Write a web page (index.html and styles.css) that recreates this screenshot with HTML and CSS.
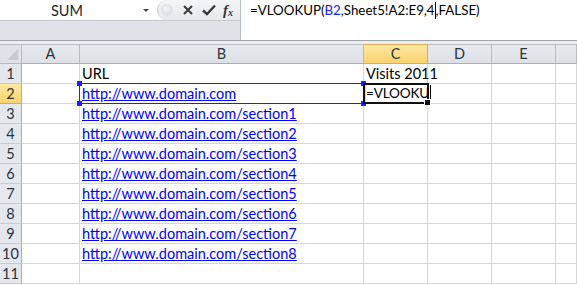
FILE: index.html
```html
<!DOCTYPE html>
<html lang="en">
<head>
    <meta charset="UTF-8">
    <meta name="viewport" content="width=device-width, initial-scale=1.0">
    <title>VLOOKUP</title>
    <link rel="stylesheet" href="styles.css">
</head>
<body>
    <div class="toolbar">
        <div class="toolbar-left">
            <div class="name-row">
                <div class="namebox">SUM</div>
                <div class="dropdown"></div>
                <div class="buttons">
                    <span class="knob"></span>
                    <svg class="btn" width="12" height="12" viewBox="0 0 12 12">
                        <path d="M2 2 L10 10 M10 2 L2 10" stroke="#3a3a3a" stroke-width="2" fill="none"/>
                    </svg>
                    <svg class="btn" width="14" height="12" viewBox="0 0 14 12">
                        <path d="M1 6.5 L5 10 L13 1.5" stroke="#3a3a3a" stroke-width="2.4" fill="none"/>
                    </svg>
                    <span class="fx">f<sub>x</sub></span>
                </div>
            </div>
            <div class="name-under"></div>
        </div>
        <div class="formula">=VLOOKUP(<span class="ref">B2</span>,Sheet5!A2:E9,4<span class="caret"></span>,FALSE)</div>
    </div>
    <div class="splitter"></div>

    <div class="sheet">
        <!-- header row -->
        <div class="corner"><span class="corner-tri"></span></div>
        <div class="colhead">A</div>
        <div class="colhead">B</div>
        <div class="colhead active">C</div>
        <div class="colhead">D</div>
        <div class="colhead">E</div>
        <div class="colhead"></div>

        <div class="rowhead">1</div>
        <div class="cell"></div>
        <div class="cell">URL</div>
        <div class="cell overflow">Visits 2011</div>
        <div class="cell"></div>
        <div class="cell"></div>
        <div class="cell"></div>

        <div class="rowhead active">2</div>
        <div class="cell"></div>
        <div class="cell ref-range">
            <a href="#">http://www.domain.com</a>
            <span class="handle tl"></span><span class="handle bl"></span>
            <span class="handle tr"></span><span class="handle br"></span>
        </div>
        <div class="cell editing">
            <div class="edit-text">=VLOOKU<span class="caret"></span></div>
            <span class="fill"></span>
        </div>
        <div class="cell"></div>
        <div class="cell"></div>
        <div class="cell"></div>

        <div class="rowhead">3</div>
        <div class="cell"></div>
        <div class="cell"><a href="#">http://www.domain.com/section1</a></div>
        <div class="cell"></div><div class="cell"></div><div class="cell"></div><div class="cell"></div>

        <div class="rowhead">4</div>
        <div class="cell"></div>
        <div class="cell"><a href="#">http://www.domain.com/section2</a></div>
        <div class="cell"></div><div class="cell"></div><div class="cell"></div><div class="cell"></div>

        <div class="rowhead">5</div>
        <div class="cell"></div>
        <div class="cell"><a href="#">http://www.domain.com/section3</a></div>
        <div class="cell"></div><div class="cell"></div><div class="cell"></div><div class="cell"></div>

        <div class="rowhead">6</div>
        <div class="cell"></div>
        <div class="cell"><a href="#">http://www.domain.com/section4</a></div>
        <div class="cell"></div><div class="cell"></div><div class="cell"></div><div class="cell"></div>

        <div class="rowhead">7</div>
        <div class="cell"></div>
        <div class="cell"><a href="#">http://www.domain.com/section5</a></div>
        <div class="cell"></div><div class="cell"></div><div class="cell"></div><div class="cell"></div>

        <div class="rowhead">8</div>
        <div class="cell"></div>
        <div class="cell"><a href="#">http://www.domain.com/section6</a></div>
        <div class="cell"></div><div class="cell"></div><div class="cell"></div><div class="cell"></div>

        <div class="rowhead">9</div>
        <div class="cell"></div>
        <div class="cell"><a href="#">http://www.domain.com/section7</a></div>
        <div class="cell"></div><div class="cell"></div><div class="cell"></div><div class="cell"></div>

        <div class="rowhead">10</div>
        <div class="cell"></div>
        <div class="cell"><a href="#">http://www.domain.com/section8</a></div>
        <div class="cell"></div><div class="cell"></div><div class="cell"></div><div class="cell"></div>

        <div class="rowhead">11</div>
        <div class="cell"></div><div class="cell"></div><div class="cell"></div>
        <div class="cell"></div><div class="cell"></div><div class="cell"></div>
    </div>
</body>
</html>
```

FILE: styles.css
```css
body {
    margin: 0;
    width: 577px;
    height: 285px;
    overflow: hidden;
    background-color: #fff;
    font-family: Lato, "Liberation Sans", sans-serif;
    font-size: 14.5px;
    color: #000;
}

/* formula bar */
.toolbar {
    display: flex;
    height: 40px;
    border-bottom: 1px solid #9da4ac;
}
.toolbar-left {
    width: 240px;
    border-right: 1px solid #b6bcc4;
    display: flex;
    flex-direction: column;
}
.name-row {
    height: 20px;
    display: flex;
    align-items: center;
    background-color: #fff;
    border-bottom: 1px solid #c5cad1;
}
.namebox {
    width: 134px;
    text-align: center;
    color: #1e1e1e;
}
.dropdown {
    width: 0;
    height: 0;
    margin-left: 9px;
    border-left: 3px solid transparent;
    border-right: 3px solid transparent;
    border-top: 3px solid #444;
}
.buttons {
    flex: 1;
    height: 20px;
    margin-left: 8px;
    display: flex;
    align-items: center;
    border-left: 1px solid #c9ced4;
    border-radius: 10px 0 0 10px;
    background: linear-gradient(#f4f5f7, #e6e9ed);
}
.knob {
    width: 10px;
    height: 10px;
    margin-left: 3px;
    border-radius: 50%;
    background: radial-gradient(circle at 40% 35%, #f2f3f5, #d3d7dc);
    border: 1px solid #dfe2e6;
}
.btn {
    margin-left: 9px;
}
.btn + .btn {
    margin-left: 8px;
}
.fx {
    margin-left: 7px;
    font-family: "Liberation Serif", serif;
    font-style: italic;
    font-weight: bold;
    font-size: 15px;
    color: #3a3a3a;
    line-height: 1;
}
.fx sub {
    font-size: 10px;
    vertical-align: -1px;
}
.name-under {
    flex: 1;
    background-color: #dfe3e8;
}
.formula {
    flex: 1;
    padding: 2px 0 0 9px;
    font-size: 13.3px;
    line-height: 17px;
    color: #000;
    white-space: nowrap;
}
.ref {
    color: #1a1aff;
}
.caret {
    display: inline-block;
    width: 1px;
    height: 17px;
    vertical-align: -4px;
    background-color: #000;
}
.splitter {
    height: 3px;
    background-color: #eceef1;
}

/* grid */
.sheet {
    display: grid;
    grid-template-columns: 22px 58px 284px 64px 64px 64px 21px;
    grid-auto-rows: 20px;
}
.corner,
.colhead,
.rowhead,
.cell {
    box-sizing: border-box;
    border-right: 1px solid #d6d6d6;
    border-bottom: 1px solid #d6d6d6;
}
.corner {
    position: relative;
    background-color: #dfe3e8;
    border-top: 1px solid #b7bcc2;
    border-color: #b7bcc2;
}
.corner-tri {
    position: absolute;
    right: 3px;
    bottom: 3px;
    width: 0;
    height: 0;
    border-left: 11px solid transparent;
    border-bottom: 11px solid #c6cbd1;
}
.colhead {
    background: linear-gradient(#e6e9ed, #dde1e6);
    border-top: 1px solid #b7bcc2;
    border-right-color: #b7bcc2;
    border-bottom-color: #a9aeb5;
    text-align: center;
    line-height: 18px;
    color: #2b3340;
}
.rowhead {
    background-color: #e4e7eb;
    border-right-color: #a9aeb5;
    border-bottom-color: #c7ccd2;
    text-align: center;
    line-height: 19px;
    color: #2b3340;
}
.colhead.active,
.rowhead.active {
    background: linear-gradient(#fde7a4, #f9d46e);
    border-color: #e1a94a;
    color: #333;
}
.cell {
    position: relative;
    padding-left: 2px;
    line-height: 19px;
    white-space: nowrap;
}
.cell.overflow {
    overflow: visible;
    z-index: 1;
}
.cell a {
    color: #0000ff;
}

/* reference outline around B2 */
.ref-range {
    border: 1px solid #1f1fff;
    margin: -1px 0 0 -1px;
    padding-left: 2px;
    z-index: 2;
}
.handle {
    position: absolute;
    width: 5px;
    height: 5px;
    background-color: #1f1fff;
}
.handle.tl { left: -3px; top: -3px; }
.handle.bl { left: -3px; bottom: -3px; }
.handle.tr { right: -3px; top: -3px; }
.handle.br { right: -3px; bottom: -3px; }

/* active cell C2 */
.editing {
    border: 2px solid #111;
    margin: -1px -1px 0 -1px;
    padding-left: 1px;
    line-height: 17px;
    z-index: 3;
    box-shadow: inset 1px 0 0 #ffe400;
}
.edit-text {
    white-space: nowrap;
    font-size: 13.6px;
    letter-spacing: -0.2px;
}
.editing .caret {
    height: 16px;
    margin-left: 1px;
    vertical-align: -3px;
}
.fill {
    position: absolute;
    right: -4px;
    bottom: -4px;
    width: 5px;
    height: 5px;
    background-color: #111;
    border: 1px solid #fff;
}
```
